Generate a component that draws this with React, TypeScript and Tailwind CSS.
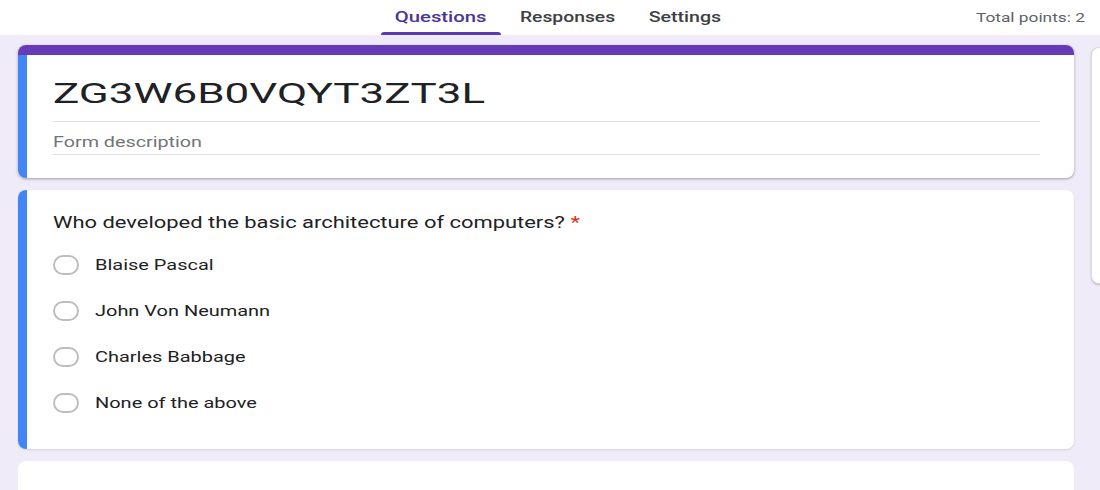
const options = ["Blaise Pascal", "John Von Neumann", "Charles Babbage", "None of the above"];

export default function App() {
  return (
    <div className="h-[490px] w-[1100px] overflow-hidden bg-[#f0ebf8] font-['Roboto',sans-serif]">
      {/* Header tabs */}
      <div className="flex h-[35px] items-stretch bg-white">
        <div className="flex-1" />
        <div className="ml-[16px] flex items-stretch">
          <div className="relative flex w-[120px] items-center justify-center text-[14px] font-medium text-[#4b3596]">
            <span className="inline-block scale-x-[1.45]">Questions</span>
            <span className="absolute bottom-0 left-0 h-[3px] w-full rounded-t-[3px] bg-[#5b3bb0]" />
          </div>
          <div className="ml-[20px] flex w-[95px] items-center justify-center text-[14px] font-medium text-[#3c4043]">
            <span className="inline-block scale-x-[1.38]">Responses</span>
          </div>
          <div className="ml-[33px] flex w-[72px] items-center justify-center text-[14px] font-medium text-[#3c4043]">
            <span className="inline-block scale-x-[1.4]">Settings</span>
          </div>
        </div>
        <div className="flex flex-1 items-center justify-end pr-[15px] text-[13px] text-[#5f6368]">
          <span className="inline-block origin-right scale-x-[1.33]">Total points: 2</span>
        </div>
      </div>

      <div className="flex gap-[17px] pl-[18px] pt-[10px]">
        <div className="flex w-[1056px] shrink-0 flex-col gap-[12px]">
          {/* Title card */}
          <div className="overflow-hidden rounded-[8px] bg-white shadow-[0_1px_2px_rgba(60,64,67,0.3),0_1px_3px_1px_rgba(60,64,67,0.12)]">
            <div className="h-[10px] bg-[#673ab7]" />
            <div className="flex">
              <div className="w-[9px] bg-[#4285f4]" />
              <div className="flex-1 pl-[26px] pr-[34px] pt-[20px] pb-[23px]">
                <div className="border-b border-[#e0e0e0] pb-[8px] text-[28px] leading-[38px] text-[#202124]">
                  <span className="inline-block origin-left scale-x-[1.57]">ZG3W6B0VQYT3ZT3L</span>
                </div>
                <div className="border-b border-[#e0e0e0] pt-[10px] pb-[2px] text-[14px] leading-[20px] text-[#70757a]">
                  <span className="inline-block origin-left scale-x-[1.41]">Form description</span>
                </div>
              </div>
            </div>
          </div>

          {/* Question card */}
          <div className="flex h-[259px] overflow-hidden rounded-[8px] bg-white shadow-[0_1px_2px_rgba(60,64,67,0.15)]">
            <div className="w-[9px] bg-[#4285f4]" />
            <div className="flex-1 pl-[26px] pt-[22px]">
              <div className="text-[16px] leading-[22px] text-[#202124]">
                <span className="inline-block origin-left scale-x-[1.37]">
                  Who developed the basic architecture of computers?<span className="ml-[4px] text-[#d93025]">*</span>
                </span>
              </div>
              <div className="mt-[20px] flex flex-col gap-[24px]">
                {options.map((o) => (
                  <div key={o} className="flex h-[22px] items-center">
                    <span className="h-[20px] w-[26px] rounded-full border-2 border-[#bdbdbd]" />
                    <span className="ml-[16px] inline-block origin-left scale-x-[1.33] text-[15px] text-[#202124]">{o}</span>
                  </div>
                ))}
              </div>
            </div>
          </div>

          {/* Next card */}
          <div className="h-[60px] rounded-[8px] bg-white" />
        </div>

        {/* Floating side toolbar */}
        <div className="mt-[2px] h-[237px] w-[40px] shrink-0 rounded-[8px] border border-[#dadce0] bg-white shadow-[0_1px_2px_rgba(60,64,67,0.3)]" />
      </div>
    </div>
  );
}
